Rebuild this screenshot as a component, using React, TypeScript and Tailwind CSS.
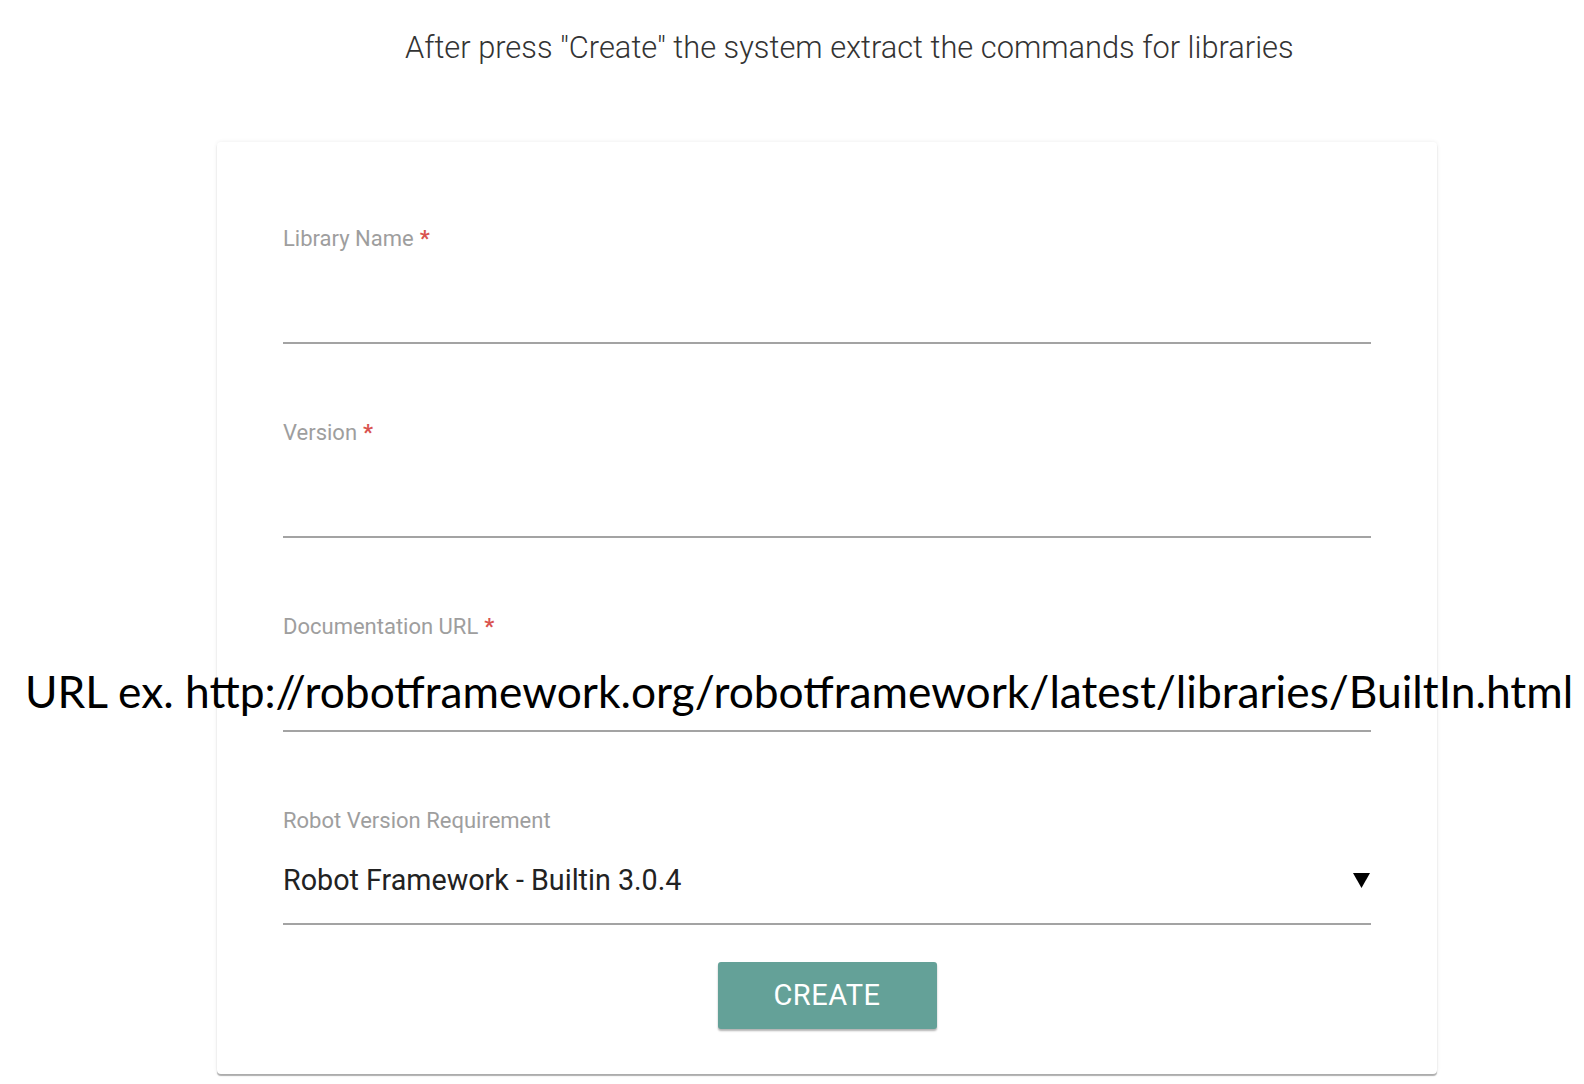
import React from "react";

function Field({ label, required }: { label: string; required?: boolean }) {
  return (
    <div className="mb-[78px]">
      <div className="h-[24px] text-[22px] leading-[21px] text-[#9e9e9e]">
        {label}
        {required && <span className="ml-[6px] font-bold text-[#d9534f]">*</span>}
      </div>
      <div className="h-[92px] border-b-2 border-[#a3a3a3]" />
    </div>
  );
}

export default function App() {
  return (
    <div className="relative min-h-[1084px] bg-white font-['Roboto',sans-serif]">
      <h1 className="pl-[405px] pt-[28px] text-[30.8px] font-light leading-[40px] text-[#333]">
        After press "Create" the system extract the commands for libraries
      </h1>
      <div className="ml-[217px] mt-[74px] w-[1220px] rounded-[4px] bg-white px-[66px] pb-[45px] pt-[86px] shadow-[0_2px_1px_rgba(0,0,0,0.3),0_0_4px_rgba(0,0,0,0.08)]">
        <Field label="Library Name" required />
        <Field label="Version" required />
        <Field label="Documentation URL" required />
        <div>
          <div className="h-[24px] text-[22px] leading-[21px] text-[#9e9e9e]">Robot Version Requirement</div>
          <div className="flex h-[91px] items-start justify-between border-b-2 border-[#a3a3a3] pt-[30px]">
            <span className="text-[28.7px] leading-[32px] text-[#222]">Robot Framework - Builtin 3.0.4</span>
            <svg width="17" height="15" viewBox="0 0 17 15" className="mr-[1px] mt-[9px]">
              <polygon points="0,0 17,0 8.5,15" fill="#000" />
            </svg>
          </div>
        </div>
        <div className="mt-[37px] flex justify-center">
          <button className="h-[67px] w-[219px] rounded-[3px] bg-[#64a198] text-[29px] tracking-[0.5px] text-white shadow-[0_2px_2px_rgba(0,0,0,0.3)]">
            CREATE
          </button>
        </div>
      </div>
      <div className="absolute left-[25px] top-[666px] whitespace-nowrap font-['Lato',sans-serif] text-[44.3px] leading-[50px] text-black">
        URL ex. http://robotframework.org/robotframework/latest/libraries/BuiltIn.html
      </div>
    </div>
  );
}
